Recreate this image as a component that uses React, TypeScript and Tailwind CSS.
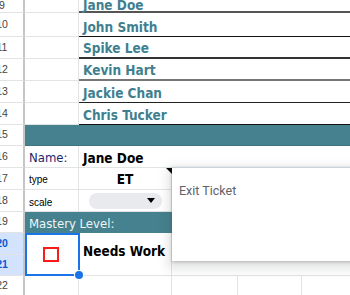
import React from 'react'

const names = [
  { n: 9, h: 'h-[13px]', b: 'border-b-2 border-b-[#555]' },
  { n: 10, h: 'h-[24px]', b: 'border-b border-b-[#111]' },
  { n: 11, h: 'h-[22px]', b: 'border-b-2 border-b-[#333]' },
  { n: 12, h: 'h-[22px]', b: 'border-b-2 border-b-[#777]' },
  { n: 13, h: 'h-[22px]', b: 'border-b border-b-[#222]' },
  { n: 14, h: 'h-[22px]', b: 'border-b border-b-[#111]' },
]
const people = ['Jane Doe', 'John Smith', 'Spike Lee', 'Kevin Hart', 'Jackie Chan', 'Chris Tucker']

const grid = 'border-[#e2e3e3]'
const cond = "font-['DejaVu_Sans_Condensed','DejaVu_Sans',sans-serif] font-stretch-condensed"

function Head({ n, sel }: { n: number; sel?: boolean }) {
  return (
    <div className={`w-[25px] shrink-0 h-full overflow-hidden border-r-2 border-r-[#c4c7c5] border-b ${grid} ${sel ? 'bg-[#d3e3fd]' : 'bg-white'}`}>
      <div className={`w-[48px] -ml-[22px] h-full flex items-center justify-center text-[10.5px] font-['Liberation_Sans',Arial,sans-serif] ${sel ? 'font-bold text-[#0b57d0]' : 'text-[#444]'}`}>{n}</div>
    </div>
  )
}

export default function App() {
  return (
    <div className="relative w-[350px] h-[295px] overflow-hidden bg-white">
      {names.map((r, i) => (
        <div key={r.n} className={`flex ${r.h}`}>
          <Head n={r.n} />
          <div className={`w-[54px] shrink-0 border-r border-b ${grid}`} />
          <div className={`flex-1 flex pl-[4px] ${i === 0 ? 'items-center' : 'items-end'} ${r.b}`}>
            <span className={`${cond} font-bold text-[13.5px] text-[#3f7f90] ${i === 0 ? 'leading-[11px]' : 'leading-[16px] pb-[1px]'}`}>{people[i]}</span>
          </div>
        </div>
      ))}

      <div className="flex h-[21px]">
        <Head n={15} />
        <div className="flex-1 bg-[#45818e] border-b border-b-[#3d747f]" />
      </div>

      <div className="flex h-[22px]">
        <Head n={16} />
        <div className={`w-[54px] shrink-0 border-r border-b ${grid} flex items-end pl-[4px]`}>
          <span className={`${cond} text-[13px] leading-[16px] text-[#1f1f6b] pb-[1px]`}>Name:</span>
        </div>
        <div className={`flex-1 border-b ${grid} flex items-end pl-[4px]`}>
          <span className={`${cond} font-bold text-[13.5px] leading-[16px] text-black pb-[1px]`}>Jane Doe</span>
        </div>
      </div>

      <div className="flex h-[22px]">
        <Head n={17} />
        <div className={`w-[54px] shrink-0 border-r border-b ${grid} flex items-end pl-[4px]`}>
          <span className="font-['Liberation_Sans',Arial,sans-serif] text-[10px] leading-[13px] pb-[3px] text-black">type</span>
        </div>
        <div className={`relative w-[93px] shrink-0 border-r border-b ${grid} flex items-end justify-center`}>
          <span className={`${cond} font-bold text-[13.5px] leading-[16px] text-black pb-[2px]`}>ET</span>
          <div className="absolute top-0 -right-[1px] w-0 h-0 border-t-[6px] border-t-black border-l-[6px] border-l-transparent" />
        </div>
        <div className="flex-1" />
      </div>

      <div className="flex h-[22px]">
        <Head n={18} />
        <div className={`w-[54px] shrink-0 border-r border-b ${grid} flex items-end pl-[4px]`}>
          <span className="font-['Liberation_Sans',Arial,sans-serif] text-[10px] leading-[13px] pb-[2px] text-black">scale</span>
        </div>
        <div className={`w-[93px] shrink-0 border-r border-b ${grid} flex items-center pl-[10px]`}>
          <div className="w-[73px] h-[16px] rounded-full bg-[#e8eaed] flex items-center justify-end pr-[7px]">
            <div className="w-0 h-0 border-t-[5px] border-t-black border-x-[4px] border-x-transparent" />
          </div>
        </div>
        <div className="flex-1" />
      </div>

      <div className="flex h-[21px]">
        <Head n={19} />
        <div className="w-[147px] shrink-0 bg-[#45818e] flex items-end pl-[4px]">
          <span className={`${cond} text-[13px] leading-[16px] text-[#eef5f5] pb-[1px]`}>Mastery Level:</span>
        </div>
        <div className="flex-1" />
      </div>

      <div className="flex h-[43px]">
        <div className="w-[25px] shrink-0 flex flex-col">
          <div className="h-[22px]"><Head n={20} sel /></div>
          <div className="h-[21px]"><Head n={21} sel /></div>
        </div>
        <div className="relative w-[55px] -mr-[1px] shrink-0 border-2 border-[#1a73e8] flex items-center justify-center pr-[3px]">
          <div className="w-[16px] h-[15px] border-2 border-[#ff1a1a] bg-white" />
          <div className="absolute -right-[5px] -bottom-[5px] w-[8px] h-[8px] rounded-full bg-[#1a73e8] ring-1 ring-white" />
        </div>
        <div className={`w-[93px] shrink-0 border-r border-b ${grid} pl-[4px] pt-[5px]`}>
          <span className={`${cond} font-bold text-[13.5px] leading-[16px] text-black`}>Needs Work</span>
        </div>
        <div className={`flex-1 border-b ${grid}`} />
      </div>

      <div className="flex h-[20px]">
        <Head n={22} />
        <div className={`w-[54px] shrink-0 border-r ${grid}`} />
        <div className={`w-[93px] shrink-0 border-r ${grid}`} />
        <div className={`w-[66px] shrink-0 border-r ${grid}`} />
        <div className={`w-[64px] shrink-0 border-r ${grid}`} />
        <div className="flex-1" />
      </div>

      <div className="absolute left-[172px] top-[167px] w-[200px] h-[94px] bg-white border-t border-t-[#c9d4da] shadow-[0_1px_3px_rgba(60,64,67,0.3),0_4px_10px_4px_rgba(60,64,67,0.15)] pl-[7px] pt-[9px]">
        <span className="font-['Roboto',sans-serif] text-[12.5px] text-[#5f6368]">Exit Ticket</span>
      </div>
    </div>
  )
}
